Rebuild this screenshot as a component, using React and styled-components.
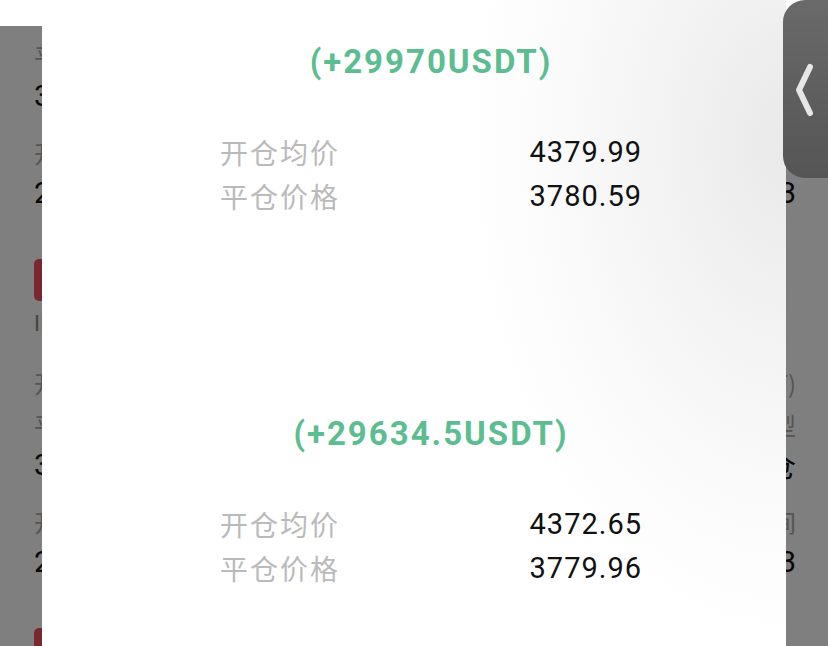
import React from 'react'
import styled, { createGlobalStyle } from 'styled-components'

const GlobalStyle = createGlobalStyle`
  html, body {
    margin: 0;
    padding: 0;
    background: #fff;
    overflow: hidden;
  }
  body {
    font-family: Roboto, "Noto Sans CJK SC", sans-serif;
  }
`

// records behind the dimmed layer; first and last are only partly scrolled into view
const records = [
  {
    partial: true,
    fields: [
      ['平仓数量', '仓位类型', '3.5', '全仓'],
      ['开仓时间', '平仓时间', '2023-05-12', '2023-05-13'],
    ],
  },
  {
    side: '平空',
    sub: 'II ETHUSDT',
    head: ['开仓均价', '收益(USDT)'],
    fields: [
      ['平仓数量', '仓位类型', '3.5', '全仓'],
      ['开仓时间', '平仓时间', '2023-05-12', '2023-05-13'],
    ],
  },
  { tail: true, fields: [] },
]

const trades = [
  { profit: '(+29970USDT)', open: '4379.99', close: '3780.59' },
  { profit: '(+29634.5USDT)', open: '4372.65', close: '3779.96' },
]

export default function App() {
  return (
    <Page>
      <GlobalStyle />
      <StatusStrip />
      <Screen>
        <List>
          {records.map((r, i) => (
            <Card key={i} $partial={r.partial}>
              {r.tail && <SideBadge />}
              {r.head && (
                <>
                  <SideBadge>{r.side}</SideBadge>
                  <SubLine>{r.sub}</SubLine>
                  <BgRow $mt={28}>
                    <BgLabel>{r.head[0]}</BgLabel>
                    <BgLabel>{r.head[1]}</BgLabel>
                  </BgRow>
                </>
              )}
              {r.fields.map((f, j) => (
                <React.Fragment key={j}>
                  <BgRow $mt={j === 0 ? (r.partial ? 0 : 12) : 27}>
                    <BgLabel>{f[0]}</BgLabel>
                    <BgLabel>{f[1]}</BgLabel>
                  </BgRow>
                  <BgRow $mt={10}>
                    <BgValue>{f[2]}</BgValue>
                    <BgValue>{f[3]}</BgValue>
                  </BgRow>
                </React.Fragment>
              ))}
            </Card>
          ))}
        </List>
        <Dim />
      </Screen>

      <Sheet>
        {trades.map((t, i) => (
          <Trade key={i} $first={i === 0}>
            <Profit>{t.profit}</Profit>
            <PriceTable>
              <PriceRow>
                <PriceLabel>开仓均价</PriceLabel>
                <PriceValue>{t.open}</PriceValue>
              </PriceRow>
              <PriceRow>
                <PriceLabel>平仓价格</PriceLabel>
                <PriceValue>{t.close}</PriceValue>
              </PriceRow>
            </PriceTable>
          </Trade>
        ))}
      </Sheet>

      <SideTab>
        <svg width="20" height="56" viewBox="0 0 20 56">
          <polyline
            points="15,5 4,28 15,51"
            fill="none"
            stroke="#e6e6e6"
            strokeWidth="6"
            strokeLinecap="round"
            strokeLinejoin="round"
          />
        </svg>
      </SideTab>
    </Page>
  )
}

const Page = styled.div`
  position: relative;
  width: 828px;
  height: 646px;
  overflow: hidden;
  background: #fff;
`

const StatusStrip = styled.div`
  height: 26px;
  background: #fff;
`

const Screen = styled.div`
  position: relative;
  height: 620px;
  overflow: hidden;
`

const List = styled.div`
  display: flex;
  flex-direction: column;
`

const Card = styled.div`
  display: flex;
  flex-direction: column;
  padding: ${p => (p.$partial ? 14 : 0)}px 32px 52px 34px;
`

const SideBadge = styled.div`
  width: 84px;
  height: 42px;
  border-radius: 5px;
  background: #f5505f;
  color: #fff;
  font-size: 22px;
  line-height: 42px;
  text-align: center;
`

const SubLine = styled.div`
  margin-top: 8px;
  height: 30px;
  line-height: 30px;
  font-size: 22px;
  color: #888;
`

const BgRow = styled.div`
  margin-top: ${p => p.$mt}px;
  height: 30px;
  display: flex;
  justify-content: space-between;
  align-items: center;
`

const BgLabel = styled.span`
  font-family: "Noto Sans CJK SC", sans-serif;
  font-size: 24px;
  color: #aaa;
`

const BgValue = styled.span`
  font-family: Roboto, "Noto Sans CJK SC", sans-serif;
  font-size: 30px;
  color: #111;
`

const Dim = styled.div`
  position: absolute;
  inset: 0;
  background: rgba(0, 0, 0, 0.5);
`

const Sheet = styled.div`
  position: absolute;
  left: 42px;
  top: 0;
  bottom: 0;
  width: 744px;
  box-sizing: border-box;
  padding: 42px 144px 0 178px;
  background:
    radial-gradient(ellipse 320px 500px at 100% 22%, #e9e9e9 0%, #f2f2f2 35%, #fafafa 70%, #fff 100%);
`

const Trade = styled.div`
  margin-top: ${p => (p.$first ? 0 : 196)}px;
  display: flex;
  flex-direction: column;
`

const Profit = styled.div`
  height: 40px;
  line-height: 40px;
  text-align: center;
  font-family: Roboto, sans-serif;
  font-weight: 700;
  font-size: 33px;
  letter-spacing: 2px;
  color: #5cbd91;
`

const PriceTable = styled.div`
  margin-top: 48px;
  display: flex;
  flex-direction: column;
`

const PriceRow = styled.div`
  height: 44px;
  line-height: 44px;
  display: flex;
  justify-content: space-between;
  align-items: center;
`

const PriceLabel = styled.span`
  font-family: "Noto Sans CJK SC", sans-serif;
  font-size: 28px;
  letter-spacing: 2px;
  color: #bababa;
`

const PriceValue = styled.span`
  font-family: Roboto, sans-serif;
  font-size: 29px;
  letter-spacing: 1px;
  color: #111;
`

const SideTab = styled.div`
  position: absolute;
  top: 0;
  right: 0;
  width: 45px;
  height: 178px;
  box-sizing: border-box;
  padding: 62px 0 0 12px;
  border-radius: 22px 0 0 22px;
  background: linear-gradient(180deg, #6a6a6a 0%, #5f5f5f 50%, #555 100%);
`
